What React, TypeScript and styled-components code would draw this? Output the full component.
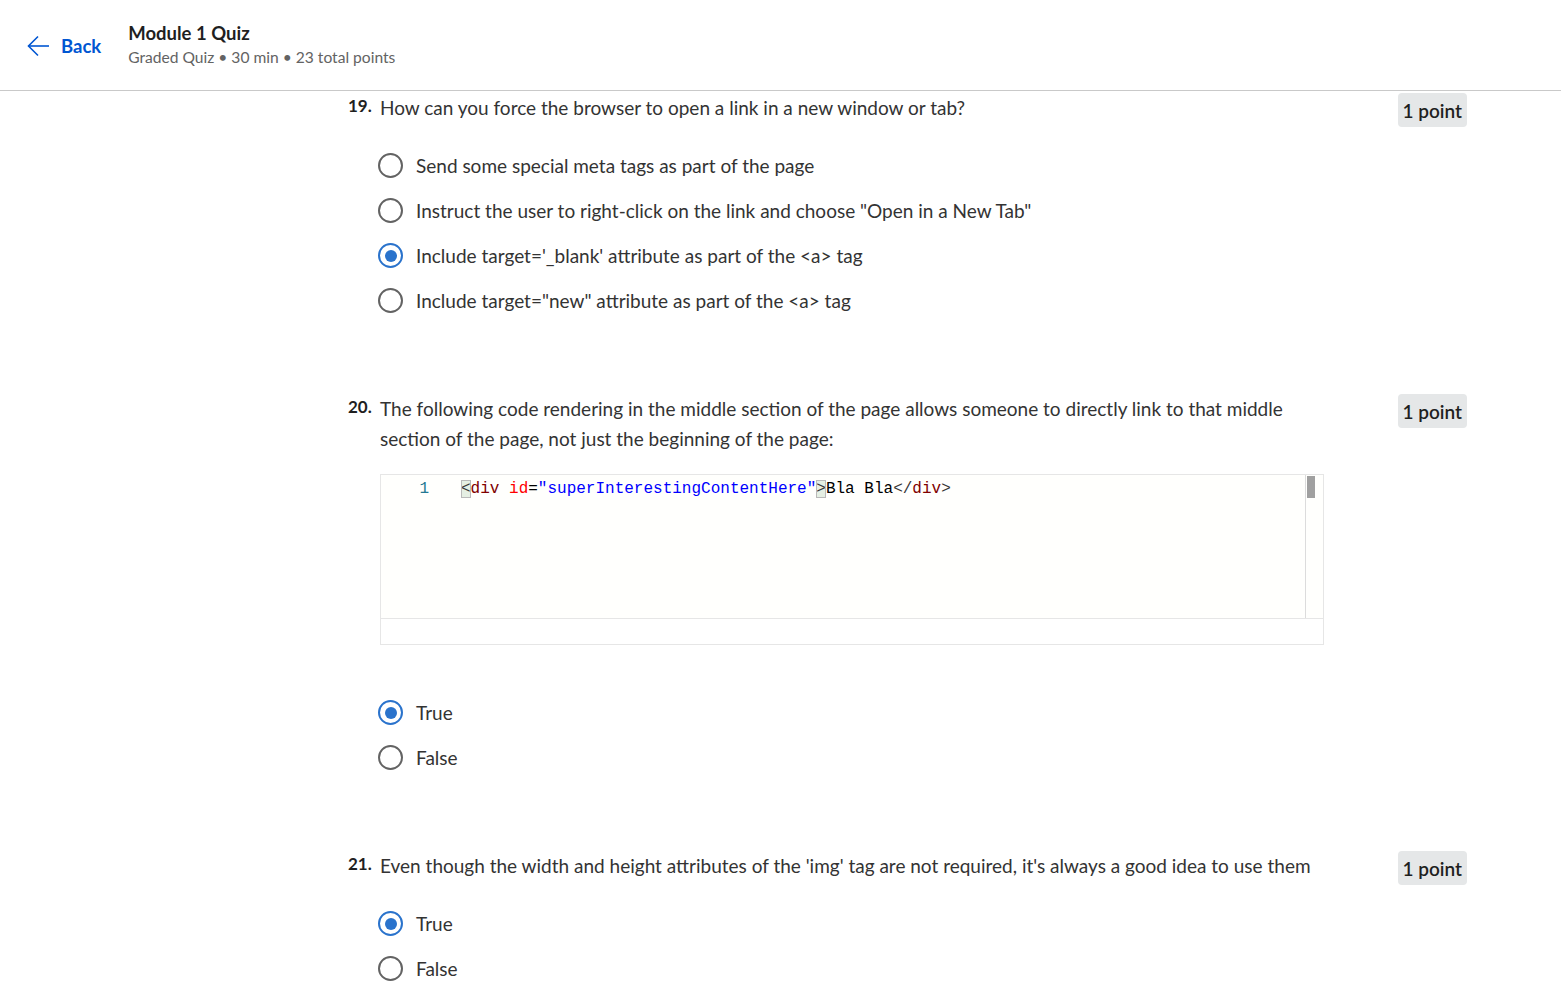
import React from "react";
import styled, { createGlobalStyle } from "styled-components";

const Global = createGlobalStyle`
  html, body { margin: 0; padding: 0; background: #ffffff; }
  body { font-family: "Lato", "Open Sans", sans-serif; color: #1f1f1f; }
  * { box-sizing: border-box; }
`;

const Page = styled.div`
  width: 1561px;
  min-height: 985px;
  overflow: hidden;
`;

const Header = styled.header`
  height: 91px;
  border-bottom: 1px solid #c9c9c9;
  display: flex;
  align-items: center;
  padding-left: 26px;
`;

const BackLink = styled.a`
  display: flex;
  align-items: center;
  gap: 11px;
  color: #0056d2;
  font-weight: 700;
  font-size: 18.5px;
  text-decoration: none;
  margin-right: 27px;
  margin-top: 2px;
`;

const TitleBlock = styled.div`
  display: flex;
  flex-direction: column;
  gap: 2px;
`;

const Title = styled.div`
  font-size: 18.5px;
  font-weight: 700;
  color: #1f1f1f;
  line-height: 22px;
`;

const Subtitle = styled.div`
  font-size: 15.6px;
  color: #636363;
  line-height: 22px;
`;

const Main = styled.main`
  padding: 2px 94px 0 348px;
`;

const Question = styled.section`
  display: flex;
  align-items: flex-start;
  margin-bottom: 71px;
`;

const Num = styled.div`
  width: 32px;
  flex: none;
  font-weight: 700;
  font-size: 17px;
  line-height: 26px;
  color: #1f1f1f;
`;

const Body = styled.div`
  width: 944px;
  flex: none;
`;

const Prompt = styled.div`
  font-size: 19px;
  line-height: 30px;
  color: #333333;
  margin-bottom: 20px;
`;

const Spacer = styled.div`
  flex: 1;
`;

const Badge = styled.div`
  flex: none;
  background: #e5e7e8;
  border-radius: 4px;
  padding: 0 5px;
  height: 34px;
  display: flex;
  align-items: center;
  font-size: 19px;
  font-weight: 600;
  color: #1f1f1f;
`;

const Options = styled.div`
  display: flex;
  flex-direction: column;
`;

const Option = styled.label`
  height: 45px;
  display: flex;
  align-items: center;
  gap: 13px;
  font-size: 19px;
  color: #333333;
  cursor: pointer;
`;

const Radio = styled.span<{ $checked?: boolean }>`
  width: 25px;
  height: 25px;
  border-radius: 50%;
  border: 2.5px solid ${(p) => (p.$checked ? "#2a73cc" : "#636363")};
  display: flex;
  align-items: center;
  justify-content: center;
  margin-left: -2px;
  &::after {
    content: "";
    width: 12px;
    height: 12px;
    border-radius: 50%;
    background: ${(p) => (p.$checked ? "#2a73cc" : "transparent")};
  }
`;

const Editor = styled.div`
  border: 1px solid #e6e6e6;
  height: 171px;
  margin-bottom: 45px;
  display: flex;
  flex-direction: column;
  background: #ffffff;
`;

const EditorArea = styled.div`
  height: 144px;
  background: #fffffd;
  border-bottom: 1px solid #e6e6e6;
  display: flex;
`;

const Gutter = styled.div`
  width: 80px;
  flex: none;
  font-family: "Liberation Mono", "DejaVu Sans Mono", monospace;
  font-size: 16px;
  line-height: 23px;
  padding-top: 3px;
  color: #237893;
  text-align: right;
  padding-right: 32px;
`;

const CodeLine = styled.div`
  flex: 1;
  font-family: "Liberation Mono", "DejaVu Sans Mono", monospace;
  font-size: 16px;
  line-height: 23px;
  padding-top: 3px;
  white-space: pre;
  color: #000000;
`;

const Scroll = styled.div`
  width: 18px;
  flex: none;
  border-left: 1px solid #dcdcdc;
  padding: 1px 0 0 1px;
`;

const Thumb = styled.div`
  width: 8px;
  height: 22px;
  background: #a0a0a0;
`;

const Tok = styled.span<{ $c: string }>`
  color: ${(p) => p.$c};
`;

const Bracket = styled.span`
  color: #383838;
  background: rgba(0, 100, 0, 0.1);
  outline: 1px solid #b9b9b9;
  outline-offset: -1px;
`;

const ArrowIcon = () => (
  <svg width="24" height="24" viewBox="0 0 24 24" fill="none" stroke="#0056d2" strokeWidth="1.6">
    <path d="M23 12H2.5" />
    <path d="M12 2.5L2.5 12L12 21.5" />
  </svg>
);

type Opt = { text: string; checked?: boolean };

const QuestionBlock = ({
  n,
  prompt,
  options,
  children,
}: {
  n: number;
  prompt: string;
  options: Opt[];
  children?: React.ReactNode;
}) => (
  <Question>
    <Num>{n}.</Num>
    <Body>
      <Prompt>{prompt}</Prompt>
      {children}
      <Options>
        {options.map((o) => (
          <Option key={o.text}>
            <Radio $checked={o.checked} />
            {o.text}
          </Option>
        ))}
      </Options>
    </Body>
    <Spacer />
    <Badge>1 point</Badge>
  </Question>
);

export default function App() {
  return (
    <Page>
      <Global />
      <Header>
        <BackLink href="#">
          <ArrowIcon />
          Back
        </BackLink>
        <TitleBlock>
          <Title>Module 1 Quiz</Title>
          <Subtitle>Graded Quiz • 30 min • 23 total points</Subtitle>
        </TitleBlock>
      </Header>
      <Main>
        <QuestionBlock
          n={19}
          prompt="How can you force the browser to open a link in a new window or tab?"
          options={[
            { text: "Send some special meta tags as part of the page" },
            { text: 'Instruct the user to right-click on the link and choose "Open in a New Tab"' },
            { text: "Include target='_blank' attribute as part of the <a> tag", checked: true },
            { text: 'Include target="new" attribute as part of the <a> tag' },
          ]}
        />
        <QuestionBlock
          n={20}
          prompt="The following code rendering in the middle section of the page allows someone to directly link to that middle section of the page, not just the beginning of the page:"
          options={[{ text: "True", checked: true }, { text: "False" }]}
        >
          <Editor>
            <EditorArea>
              <Gutter>1</Gutter>
              <CodeLine>
                <Bracket>&lt;</Bracket>
                <Tok $c="#800000">div</Tok> <Tok $c="#ff0000">id</Tok>
                <Tok $c="#000000">=</Tok>
                <Tok $c="#0000ff">"superInterestingContentHere"</Tok>
                <Bracket>&gt;</Bracket>
                <Tok $c="#000000">Bla Bla</Tok>
                <Tok $c="#383838">&lt;/</Tok>
                <Tok $c="#800000">div</Tok>
                <Tok $c="#383838">&gt;</Tok>
              </CodeLine>
              <Scroll>
                <Thumb />
              </Scroll>
            </EditorArea>
          </Editor>
        </QuestionBlock>
        <QuestionBlock
          n={21}
          prompt="Even though the width and height attributes of the 'img' tag are not required, it's always a good idea to use them"
          options={[{ text: "True", checked: true }, { text: "False" }]}
        />
      </Main>
    </Page>
  );
}
